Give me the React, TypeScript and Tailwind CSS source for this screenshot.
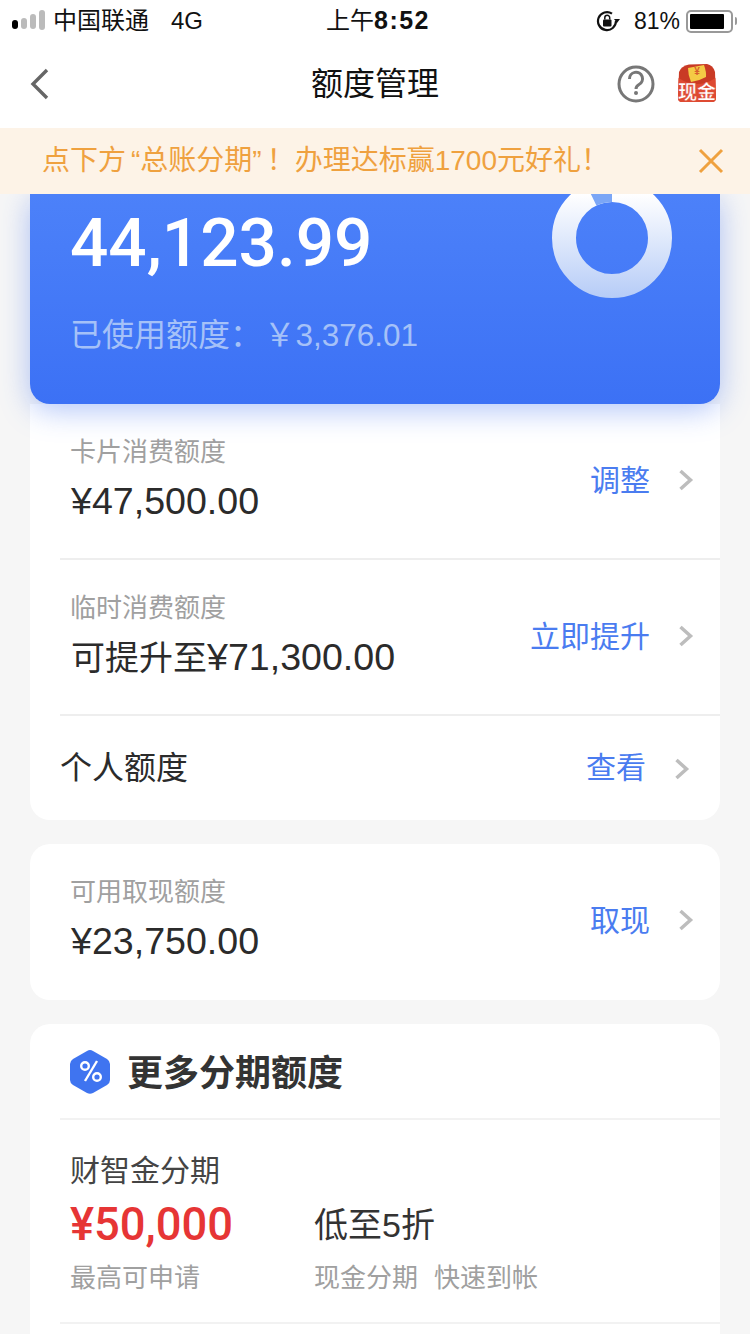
const sans = 'font-["Liberation_Sans","Noto_Sans_CJK_SC",sans-serif]';
const numeric = 'font-["Roboto","Liberation_Sans",sans-serif]';

function Chevron({ className = '' }: { className?: string }) {
  return (
    <svg width="16" height="24" viewBox="0 0 16 24" fill="none" className={`shrink-0 ${className}`}>
      <path d="M2.5 3 L12.5 12 L2.5 21" stroke="#bdbdbd" strokeWidth="3.5" />
    </svg>
  );
}

function SignalBars() {
  return (
    <div className="flex items-center gap-[3px] mr-[8px]">
      <div className="w-[6px] h-[9px] mt-[7px] rounded-[3px] bg-black" />
      <div className="w-[6px] h-[11px] mt-[5px] rounded-[3px] bg-[#bbbbbb]" />
      <div className="w-[6px] h-[15px] mt-[1px] rounded-[3px] bg-[#bbbbbb]" />
      <div className="w-[6px] h-[20px] -mt-[2px] rounded-[3px] bg-[#bbbbbb]" />
    </div>
  );
}

function StatusBar() {
  return (
    <div className="h-[40px] shrink-0 flex items-center bg-white pt-[2px] pl-[12px] pr-[13px] text-[24px] text-[#111]">
      <div className="flex-1 flex items-center">
        <SignalBars />
        <span>中国联通</span>
        <span className="ml-[22px]">4G</span>
      </div>
      <div className="pl-[7px]">
        上午<span className="text-[25px] font-bold tracking-[1.5px]">8:52</span>
      </div>
      <div className="flex-1 flex items-center justify-end">
        <svg width="24" height="22" viewBox="0 0 24 22" fill="none" className="mr-[14px]">
          <path d="M20 11 A9 9 0 1 1 16 3.6" stroke="#111" strokeWidth="2.2" />
          <path d="M18 9 L24 9 L21 13 Z" fill="#111" />
          <rect x="7" y="9.5" width="8.500" height="7" rx="1" fill="#111" />
          <path d="M8.800 9.500 V7.800 A2.400 2.400 0 0 1 13.700 7.800 V9.500" stroke="#111" strokeWidth="1.500" />
        </svg>
        <span className="text-[23px]">81%</span>
        <div className="ml-[6px] w-[47px] h-[23px] rounded-[5px] border-2 border-[#999] p-[2px] flex">
          <div className="w-[34px] h-full bg-black rounded-[1px]" />
        </div>
        <div className="ml-[2px] w-[2px] h-[8px] bg-[#999] rounded-r-[2px]" />
      </div>
    </div>
  );
}

function CashPacket() {
  return (
    <svg width="40" height="40" viewBox="0 0 40 40" className="-mt-[2px]">
      <path d="M2 9 Q4 3 12 1.500 L30 1 Q36 2 38 9 L39 35 Q39 39 35 39 L5 39 Q1 39 1 35 Z" fill="#c93a25" />
      <path d="M1.500 15 Q20 27 38.500 15 L39 35 Q39 39 35 39 L5 39 Q1 39 1 35 Z" fill="#de4a32" />
      <path d="M11 5 L27 2 Q29.500 9 29 14 Q22 18 14 19 Q11 12 11 5 Z" fill="#f4cb45" />
      <text x="20" y="12" textAnchor="middle" fontSize="10" fontWeight="700" fill="#d8602c" fontFamily="Liberation Sans">¥</text>
      <text x="20" y="36" textAnchor="middle" fontSize="19" fontWeight="700" fill="#fff" stroke="#e0503a" strokeWidth="0.4" fontFamily="Noto Sans CJK SC">现金</text>
    </svg>
  );
}

function NavBar() {
  return (
    <div className="h-[88px] shrink-0 flex items-center bg-white pl-[30px] pr-[33px]">
      <svg width="20" height="32" viewBox="0 0 20 32" fill="none">
        <path d="M17 2 L3 16 L17 30" stroke="#666" strokeWidth="3.4" />
      </svg>
      <div className="flex-1 text-center text-[32px] text-[#111] pl-[83px]">额度管理</div>
      <svg width="38" height="38" viewBox="0 0 38 38" fill="none" className="mr-[22px]">
        <circle cx="19" cy="19" r="17" stroke="#777" strokeWidth="3" />
        <path d="M12.500 14 A6.500 6.500 0 1 1 22 19.500 C19.500 21 19 22 19 24" stroke="#777" strokeWidth="3" />
        <circle cx="19" cy="28" r="2" fill="#777" />
      </svg>
      <CashPacket />
    </div>
  );
}

function Banner() {
  return (
    <div className="h-[66px] flex items-center justify-between bg-[#fdf3e7] pl-[42px] pr-[26px] text-[28px] text-[#efa13f]">
      <span className="whitespace-nowrap">
        点下方<span className="pl-[5px]">“</span>总账分期<span className="pr-[5px]">”</span>！办理达标赢1700元好礼！
      </span>
      <svg width="26" height="26" viewBox="0 0 26 26" fill="none">
        <path d="M2 2 L24 24 M24 2 L2 24" stroke="#efa13f" strokeWidth="3" />
      </svg>
    </div>
  );
}

function Ring() {
  return (
    <svg width="120" height="104" viewBox="0 0 120 104" fill="none">
      <defs>
        <linearGradient id="ring" gradientUnits="userSpaceOnUse" x1="0" y1="0" x2="0" y2="104">
          <stop offset="0" stopColor="#ffffff" />
          <stop offset="1" stopColor="#b6ccf7" />
        </linearGradient>
      </defs>
      <circle cx="60" cy="44" r="48" stroke="url(#ring)" strokeWidth="24" />
      <path d="M60 -16 L60 8 A36 36 0 0 0 44.400 11.500 L34 -10 A60 60 0 0 1 60 -16 Z" fill="#7ba6f6" />
    </svg>
  );
}

function BalanceCard() {
  return (
    <div className="relative z-10 h-[210px] shrink-0 rounded-b-[20px] bg-gradient-to-b from-[#4c81f9] to-[#3c71f5] shadow-[0_6px_30px_rgba(60,110,240,0.4)] flex justify-between pl-[40px] pr-[48px]">
      <div className="text-white">
        <div className={`mt-[11px] text-[67.5px] leading-[76px] font-medium ${numeric}`}>44,123.99</div>
        <div className="mt-[34px] flex items-center text-[32px] leading-[40px] text-[#a5c1f8]">
          <span className="w-[194px] whitespace-nowrap">已使用额度：</span>
          <span className="text-[31.5px]">￥3,376.01</span>
        </div>
      </div>
      <Ring />
    </div>
  );
}

function AmountRow({ label, value, prefix, action, border }: { label: string; value: string; prefix?: string; action: string; border?: boolean }) {
  return (
    <div className={`ml-[30px] h-[156px] pl-[11px] pr-[26px] flex justify-between border-b-2 ${border ? 'border-[#eeeeee]' : 'border-transparent'}`}>
      <div className="pt-[31px]">
        <div className="-ml-[1px] text-[26px] leading-[34px] text-[#a0a0a0]">{label}</div>
        <div className="mt-[7px] text-[37.6px] leading-[50px] text-[#2b2b2b]">
          {prefix && <span className="text-[34px]">{prefix}</span>}
          {value}
        </div>
      </div>
      <div className="flex items-center gap-[28px] pb-[2px]">
        <span className="text-[30px] text-[#4a7cf0]">{action}</span>
        <Chevron />
      </div>
    </div>
  );
}

function InstallmentCard() {
  return (
    <div className="bg-white rounded-t-[20px] h-[400px]">
      <div className="ml-[30px] h-[96px] border-b-2 border-[#f2f2f2] pl-[10px] flex items-center">
        <svg width="40" height="44" viewBox="0 0 40 44" className="mt-[1px]">
          <path d="M20 0 Q21.500 0 23 1 L37 9 Q40 11 40 14 L40 30 Q40 33 37 35 L23 43 Q20 44.500 17 43 L3 35 Q0 33 0 30 L0 14 Q0 11 3 9 L17 1 Q18.500 0 20 0 Z" fill="#3f74f0" />
          <circle cx="15" cy="16" r="3.800" fill="none" stroke="#fff" strokeWidth="2.400" />
          <circle cx="27" cy="27" r="3.800" fill="none" stroke="#fff" strokeWidth="2.400" />
          <path d="M27 11 L15 31" stroke="#fff" strokeWidth="2.400" />
        </svg>
        <span className="ml-[17px] pt-[5px] text-[36px] font-bold text-[#333333]">更多分期额度</span>
      </div>
      <div className="ml-[30px] h-[204px] border-b-2 border-[#f2f2f2] pl-[10px] pt-[31px]">
        <div className="text-[30px] leading-[40px] text-[#444444]">财智金分期</div>
        <div className="flex items-center mt-[9px]">
          <span className={`w-[244px] text-[45.3px] leading-[50px] font-medium text-[#e63535] ${numeric}`}>¥50,000</span>
          <span className="text-[34px] leading-[50px] text-[#333333]">低至5折</span>
        </div>
        <div className="flex mt-[11px] text-[26px] leading-[34px] text-[#a0a0a0]">
          <span className="w-[244px]">最高可申请</span>
          <span>现金分期</span>
          <span className="ml-[16px]">快速到帐</span>
        </div>
      </div>
    </div>
  );
}

export default function App() {
  return (
    <div className={`w-[750px] h-[1334px] overflow-hidden bg-[#f6f6f6] flex flex-col ${sans}`}>
      <StatusBar />
      <NavBar />
      <div className="relative z-20 shrink-0">
        <Banner />
      </div>
      <div className="px-[30px] flex flex-col shrink-0">
        <BalanceCard />
        <div className="bg-white rounded-b-[20px]">
          <AmountRow label="卡片消费额度" value="¥47,500.00" action="调整" border />
          <AmountRow label="临时消费额度" prefix="可提升至" value="¥71,300.00" action="立即提升" border />
          <div className="h-[104px] pb-[1px] pl-[30px] pr-[30px] flex items-center justify-between">
            <span className="text-[32px] text-[#2b2b2b]">个人额度</span>
            <div className="flex items-center gap-[28px]">
              <span className="text-[30px] text-[#4a7cf0]">查看</span>
              <Chevron className="mt-[3px]" />
            </div>
          </div>
        </div>
        <div className="mt-[24px] bg-white rounded-[20px]">
          <AmountRow label="可用取现额度" value="¥23,750.00" action="取现" />
        </div>
        <div className="mt-[24px]">
          <InstallmentCard />
        </div>
      </div>
    </div>
  );
}
